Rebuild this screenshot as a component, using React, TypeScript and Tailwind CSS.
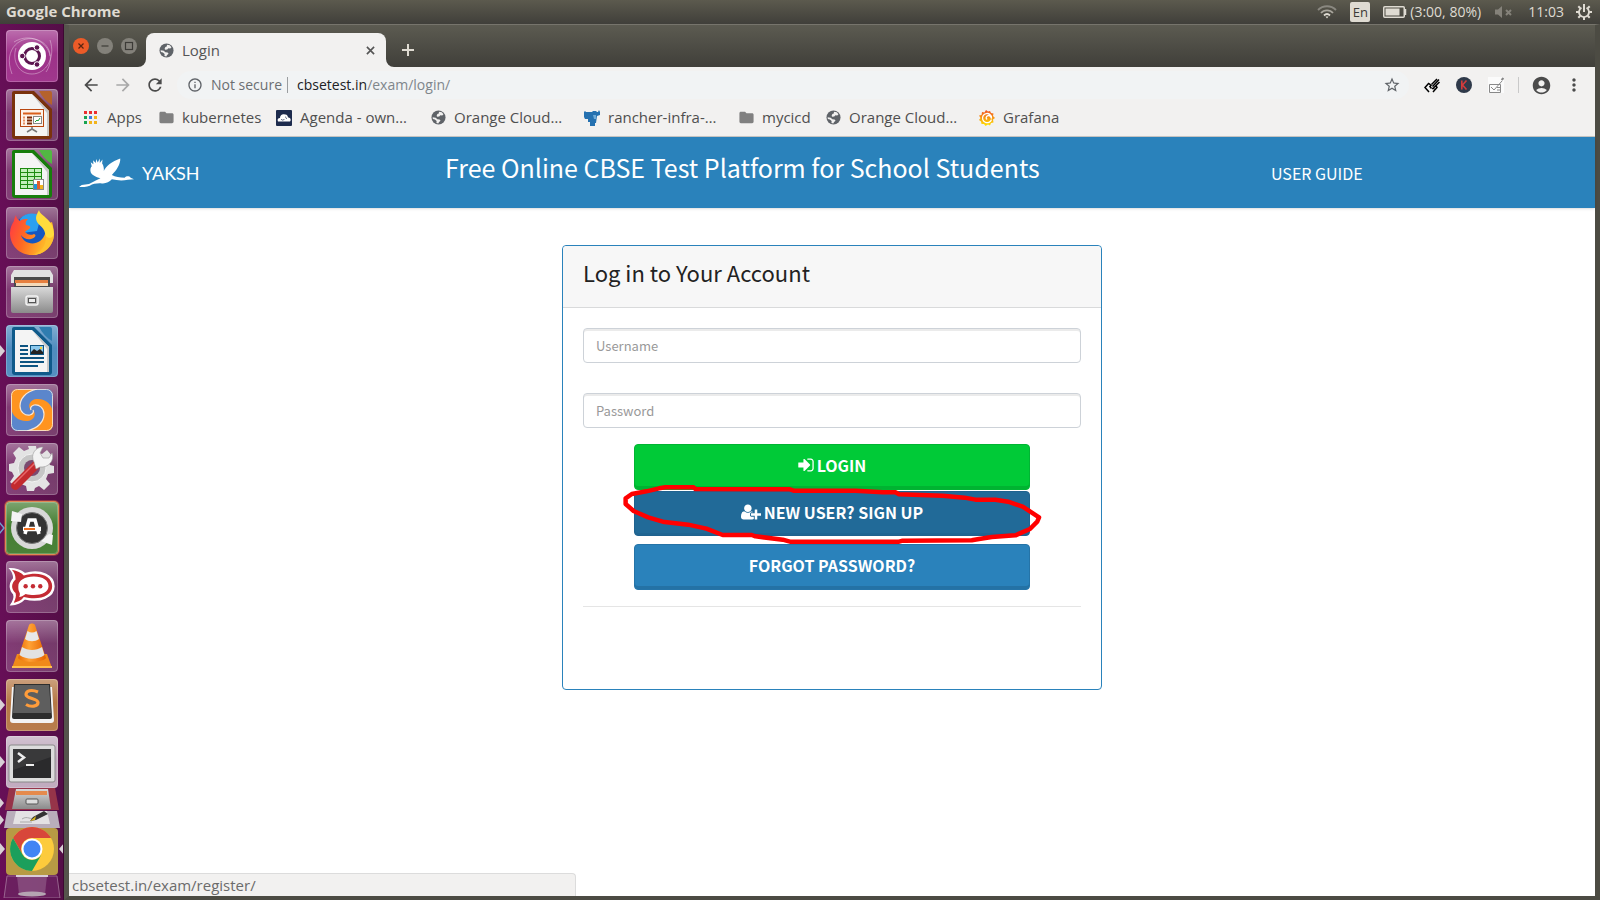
import type { ReactNode } from "react";
import {
  MdAccountCircle,
  MdArrowBack,
  MdArrowForward,
  MdFolder,
  MdInfoOutline,
  MdMoreVert,
  MdRefresh,
  MdStarBorder,
} from "react-icons/md";

/* ---------- Launcher ---------- */

const arrow = <path d="M0 20l5 6-5 6z" fill="#d8d0d6" />;

function Tile({
  label,
  fill = "#ffffff",
  opacity = 0.16,
  running,
  glow,
  children,
}: {
  label: string;
  fill?: string;
  opacity?: number;
  running?: ReactNode;
  glow?: boolean;
  children: ReactNode;
}) {
  return (
    <button aria-label={label} className="block h-[52px] w-16 shrink-0">
      <svg viewBox="0 0 64 52" className="h-[52px] w-16 overflow-visible">
        {running}
        {glow && (
          <>
            <rect x="4" y="-2" width="56" height="56" rx="6" fill="#f0803c" opacity=".35" />
            <rect x="5" y="-1" width="54" height="54" rx="5" fill="#f79a58" opacity=".8" />
          </>
        )}
        <rect x="6" width="52" height="52" rx="4" fill={fill} opacity={opacity} />
        <rect x="6" width="52" height="52" rx="4" fill="url(#gloss)" />
        <rect x="6.5" y=".5" width="51" height="51" rx="3.5" fill="none" stroke="#fff" opacity=".22" />
        {children}
      </svg>
    </button>
  );
}

function Doc({ dark, light }: { dark: string; light: string }) {
  return (
    <>
      <path d="M14 2h20l18 18v27a3 3 0 0 1-3 3H15a3 3 0 0 1-3-3V4a2 2 0 0 1 2-2z" fill={dark} />
      <path d="M39 2h11a2 2 0 0 1 2 2v12c-5-3-10-8-13-14z" fill={light} />
      <path d="M15 5h17l17 17v25H15z" fill="#f4f4f4" />
      <path d="M32 5l17 17v25h-2V24z" fill="#c9c9c9" />
    </>
  );
}

function Launcher() {
  return (
    <nav aria-label="Launcher" className="flex w-16 shrink-0 flex-col gap-[7px] overflow-hidden border-r border-[#3d0832] bg-linear-to-r from-[#670f57] to-[#540e47] pt-[6px]">
      <svg width="0" height="0" className="absolute">
        <defs>
          <linearGradient id="gloss" x2="0" y2="1">
            <stop offset="0" stopColor="#fff" stopOpacity=".32" />
            <stop offset=".45" stopColor="#fff" stopOpacity=".03" />
            <stop offset="1" stopColor="#fff" stopOpacity=".06" />
          </linearGradient>
          <linearGradient id="metal" x2="0" y2="1">
            <stop offset="0" stopColor="#d9d9d9" />
            <stop offset="1" stopColor="#8b8b8b" />
          </linearGradient>
          <linearGradient id="fox" x2="1" y2=".3">
            <stop offset="0" stopColor="#ff3647" />
            <stop offset=".45" stopColor="#ff6a22" />
            <stop offset="1" stopColor="#ffc32a" />
          </linearGradient>
          <linearGradient id="cone" x2="1" y2="0">
            <stop offset="0" stopColor="#e86a00" />
            <stop offset=".4" stopColor="#ffa235" />
            <stop offset="1" stopColor="#e56300" />
          </linearGradient>
          <clipPath id="shutter">
            <rect x="11" y="5" width="42" height="42" rx="6" />
          </clipPath>
        </defs>
      </svg>

      <Tile label="Search your computer" fill="#b0359a" opacity={0.75}>
        <g fill="none" stroke="#fff" strokeOpacity=".35">
          <path d="M12 44C2 18 22 4 38 10s14 24 8 32M50 10c6 18-4 34-18 34S12 30 16 18M14 12C30 2 48 12 50 26" />
        </g>
        <circle cx="32" cy="26" r="14" fill="#fff" />
        <circle cx="32" cy="26" r="7.5" fill="none" stroke="#5c1650" strokeWidth="3" />
        <g fill="#5c1650" stroke="#fff" strokeWidth="1">
          <circle cx="22.300" cy="26" r="2.800" />
          <circle cx="37" cy="17.500" r="2.800" />
          <circle cx="37" cy="34.500" r="2.800" />
        </g>
      </Tile>

      <Tile label="LibreOffice Impress">
        <Doc dark="#7a320c" light="#b5622c" />
        <rect x="20.500" y="20.500" width="23" height="17" fill="#fdf3ea" stroke="#b8460f" />
        <path d="M23 24.500h18" stroke="#d9601c" strokeWidth="2" />
        <path d="M27 28.500h5M27 31.500h5M27 34.500h5" stroke="#7a2a06" strokeWidth="2" />
        <path d="M23 28.500h2M23 31.500h2M23 34.500h2" stroke="#e89060" strokeWidth="2" />
        <rect x="33.500" y="27.500" width="8" height="7" fill="#fff" stroke="#888" />
        <path d="M35 33l2-2 1 1 2-3" stroke="#1fa03a" fill="none" />
        <path d="M32 38v2l-5 3M32 40l5 3" stroke="#777" strokeWidth="1.500" fill="none" />
      </Tile>

      <Tile label="LibreOffice Calc">
        <Doc dark="#177d0c" light="#52b843" />
        <rect x="20" y="20" width="22" height="21" fill="#1d8a10" />
        {[21, 25, 29, 33, 37].map((y) => (
          <path key={y} d={`M21 ${y + 1.5}h6M28 ${y + 1.5}h6M35 ${y + 1.5}h6`} stroke="#c2efba" strokeWidth="3" />
        ))}
        <rect x="33.500" y="31.500" width="10" height="10" fill="#fff" stroke="#888" />
        <path d="M35.500 41v-5" stroke="#1f97d8" strokeWidth="3" />
        <path d="M38.500 41v-8" stroke="#e0602c" strokeWidth="3" />
        <path d="M41.500 41v-4" stroke="#f0b420" strokeWidth="3" />
      </Tile>

      <Tile label="Firefox">
        <circle cx="32" cy="25" r="18" fill="#1457c0" />
        <path d="M20 12C25 6 34 5 41 9L37 24 22 26z" fill="#2ba0f0" />
        <path d="M16 8C16 11 18 13 20 14C22 12 25 12 28 12C26 14 25 16 26 18C29 19 31 19 30 21C29 23 26 23 25 25C27 27 30 29 34 27C37 28 35 31 31 32C27 33 23 31 21 28C23 36 33 39 40 34C45 30 47 24 45 18L52 15C55 24 54 34 48 41C43 46 37 48 32 48C19 48 10 38 10 26C10 21 12 17 14 14C14 12 15 10 16 8z" fill="url(#fox)" />
        <path d="M39 3C40 9 54 12 54 27C54 38 45 47 34 48C43 44 48 35 45 26C44 19 36 18 36 11C36 8 38 5 39 3z" fill="#ffdc3c" />
        <path d="M45 28C46 36 41 44 32 48C45 48 53 39 54 28C51 32 48 32 45 28z" fill="#ffb428" opacity=".7" />
      </Tile>

      <Tile label="Files">
        <path d="M14 4h36l3 5v8H11V9z" fill="#e2e2e2" />
        <path d="M14 11h36v10H14z" fill="#4a4a4a" />
        <path d="M15 14h33v3H15z" fill="#e67f3f" />
        <path d="M16 17h32v3H16z" fill="#f4d9b8" />
        <path d="M11 21h42v24a2 2 0 0 1-2 2H13a2 2 0 0 1-2-2z" fill="url(#metal)" />
        <rect x="26" y="30" width="12" height="9" rx="2" fill="#bbb" stroke="#f4f4f4" strokeWidth="1.500" />
        <rect x="28.500" y="32.500" width="7" height="4" fill="#eee" stroke="#555" />
      </Tile>

      <Tile label="LibreOffice Writer" fill="#4a90c4" opacity={0.95} running={arrow}>
        <Doc dark="#0f5a8a" light="#2f7db0" />
        <path d="M20 21h8M20 25h8M20 29h8M20 33h24M20 37h24M20 41h18" stroke="#0d5481" strokeWidth="1.800" />
        <rect x="30.500" y="20.500" width="13" height="9" fill="#8cc9ee" stroke="#0d5481" />
        <path d="M31 29v-2l3-3 3 2 3-2 3 3v2z" fill="#222" />
        <circle cx="41" cy="23" r="1.200" fill="#f5d13a" />
      </Tile>

      <Tile label="Shutter">
        <g clipPath="url(#shutter)">
          <rect x="11" y="5" width="42" height="42" fill="#5b86cc" />
          <g id="swirl">
            <path d="M11 5H37C25 8 20 15 20 22C20 28 25 32 30 31C33 30 34 28 33 26C37 30 34 36 28 37C19 38 12 32 11 24z" fill="#ff9420" />
            <path d="M37 5C25 8 20 15 20 22C20 28 25 32 30 31C33 30 34 28 33 26" fill="none" stroke="#f7e6d4" strokeWidth="1.200" />
          </g>
          <g transform="rotate(180 32 26)">
            <path d="M11 5H37C25 8 20 15 20 22C20 28 25 32 30 31C33 30 34 28 33 26C37 30 34 36 28 37C19 38 12 32 11 24z" fill="#ff9420" />
            <path d="M37 5C25 8 20 15 20 22C20 28 25 32 30 31C33 30 34 28 33 26" fill="none" stroke="#f7e6d4" strokeWidth="1.200" />
          </g>
        </g>
        <rect x="11.500" y="5.500" width="41" height="41" rx="6" fill="none" stroke="#f5ede4" opacity=".8" />
      </Tile>

      <Tile label="System Settings">
        <path d="M28 3h8l1 6 5 2 5-4 5 6-4 5 2 4 4 1v7l-6 1-2 5 4 5-6 6-5-4-4 2-1 3h-7l-1-5-5-2-5 3-6-5 4-6-2-4-3-1v-7l5-1 2-5-3-5 6-6 5 4 5-2z" fill="#e3e3e3" />
        <circle cx="32" cy="25" r="14" fill="#c6c6c6" stroke="#f2f2f2" />
        <circle cx="32" cy="25" r="8" fill="#7a4a70" />
        <path d="M34 18l6 6-22 22c-4 3-9-2-6-6z" fill="#c32a2e" />
        <path d="M35 20L14 41" stroke="#e8676a" strokeWidth="1.500" />
        <path d="M34 19c-4-7 1-15 9-15l-3 6 3 5h6l3-5c3 8-4 15-12 14l-4 2z" fill="#f3f3f3" stroke="#999" strokeWidth=".6" />
      </Tile>

      <Tile
        label="Software Updater"
        fill="#3f7a2c"
        opacity={1}
        glow
        running={<path d="M-1 20l5 6-5 6" fill="none" stroke="#6f9fd0" strokeWidth="1.500" />}
      >
        <circle cx="32" cy="26" r="21" fill="#d8d8d8" />
        <circle cx="32" cy="26" r="15.500" fill="#333" stroke="#777" />
        <path d="M12 9l10 3-1 8-10-1z" fill="#f4f4f4" />
        <path d="M52 43l-11-4 8-7 4 1z" fill="#f4f4f4" />
        <path d="M25 32l4-14h6l4 14" fill="none" stroke="#fff" strokeWidth="3.500" />
        <path d="M23 27h18" stroke="#fff" strokeWidth="4.500" />
        <path d="M24 27h11" stroke="#f07020" strokeWidth="2" />
      </Tile>

      <Tile label="Rocket.Chat">
        <g transform="translate(5.500 0) scale(.915 .97)">
          <path d="M5 8c7 0 12 2 16 5 18-5 32 2 32 13S38 43 21 39c-4 4-9 6-15 6 3-4 4-8 3-11-5-5-5-11 0-16 0-4-1-7-4-10z" fill="#fff" stroke="#fff" strokeWidth="1.500" />
          <path d="M7 9c6 1 10 3 13 6 18-5 31 1 31 11S37 41 20 37c-3 4-7 5-11 6 2-4 3-7 2-10-5-4-5-10 0-14 0-4-1-7-4-10z" fill="#c42b33" />
          <path d="M14 26c0-6 7-10 17-10s16 4 16 10-7 9-16 9c-3 0-6 0-9-1-3 2-5 3-7 3 1-2 1-4 0-5-1-2-1-4-1-6z" fill="#fff" />
          <g fill="#c42b33">
            <circle cx="22" cy="26" r="2.400" />
            <circle cx="30" cy="26" r="2.400" />
            <circle cx="38" cy="26" r="2.400" />
          </g>
        </g>
      </Tile>

      <Tile label="VLC">
        <path d="M17 34h30l5 14H12z" fill="#f08a1a" />
        <path d="M12 46h40v2H12z" fill="#ffc04a" />
        <path d="M29 5c1-2 5-2 6 0l11 33c-4 5-24 5-28 0z" fill="url(#cone)" />
        <path d="M27.500 11c3 2 6 2 9 0l2.500 8c-4 3-10 3-14 0z" fill="#e8e8e8" />
        <path d="M22 27c6 4 14 4 20 0l2.500 8c-7 5-18 5-25 0z" fill="#e2e2e2" />
      </Tile>

      <Tile label="Sublime Text" fill="#b87a40" opacity={0.95} running={arrow}>
        <path d="M12 8h40l2 33a3 3 0 0 1-3 3H13a3 3 0 0 1-3-3z" fill="#f3f3f3" />
        <path d="M14 5h36l2 33a2 2 0 0 1-2 2H14a2 2 0 0 1-2-2z" fill="#2e2e2e" />
        <path d="M15 6h34l2 28H13z" fill="#5e5e5e" />
        <path d="M38 13c-7-3-12-1-12 2.500 0 4.500 12 3.500 12 8 0 4-7 5-12 2" fill="none" stroke="#ff9c3a" strokeWidth="3.200" />
      </Tile>

      <div className="-mt-[2px] flex flex-col">
        <Tile label="Terminal" fill="#cfc2cf" opacity={0.85} running={arrow}>
          <rect x="9" y="9" width="46" height="37" rx="2" fill="#dcdcdc" stroke="#8a8a8a" />
          <rect x="13" y="13" width="38" height="29" fill="#2a2a2c" />
          <path d="M13 13h38v8L13 34z" fill="#444" opacity=".6" />
          <path d="M18 17l6 4.500-6 4.500" fill="none" stroke="#eee" strokeWidth="2.500" />
          <path d="M26 29h8" stroke="#eee" strokeWidth="2" />
        </Tile>
        <svg viewBox="0 0 64 110" className="h-[110px] w-16 shrink-0">
          <path d="M9 0h46l4 22H5z" fill="#963449" />
          <path d="M16 1h32l3 20H12z" fill="url(#metal)" />
          <path d="M16 3h31v4H16z" fill="#e58a4c" />
          <rect x="26" y="11" width="12" height="5" rx="1" fill="#ddd" stroke="#555" />
          <path d="M0 10l4 5-4 5zM0 27l4 5-4 5z" fill="#d8d0d6" />
          <path d="M7 23h50l3 17H4z" fill="#b9aebb" />
          <path d="M16 23h31l3 13H13z" fill="#e4e2e4" />
          <path d="M22 31c6-4 8 2 14-2M20 34h12" fill="none" stroke="#aaa" />
          <path d="M44 23l4 3-12 6-6 1 3-4z" fill="#333" />
          <path d="M36 28l-6 5 5-1z" fill="#d8b420" />
          <rect x="6" y="40" width="52" height="47" rx="4" fill="#b79a44" />
          <path d="M0 55l5 6-5 6zM64 55l-5 6 5 6z" fill="#d8d0d6" />
          <circle cx="32" cy="61" r="22" fill="#fccb3c" />
          <path d="M13 50a22 22 0 0 1 38.100 0H32A11 11 0 0 0 22.500 66.500z" fill="#d8473a" />
          <path d="M13 50a22 22 0 0 0 19 33l9.500-16.500a11 11 0 0 1-19 0z" fill="#1b9f5c" />
          <circle cx="32" cy="61" r="10.500" fill="#fff" />
          <circle cx="32" cy="61" r="8.500" fill="#4285f4" />
          <path d="M7 88h50l3 22H4z" fill="#6d2462" opacity=".8" stroke="#a77a9f" />
          <path d="M17 88h30l-2 18c-5 2-21 2-26 0z" fill="#b592b0" opacity=".35" />
          <path d="M16 88h32" stroke="#d9cdd7" strokeWidth="2" />
          <ellipse cx="32" cy="106" rx="14" ry="2.500" fill="#b5a5b2" />
        </svg>
      </div>
    </nav>
  );
}

/* ---------- System panel ---------- */

function Panel() {
  return (
    <header className="flex h-6 shrink-0 items-center bg-linear-to-b from-[#5c5a4e] to-[#403f3a] pr-2 pl-[6px] text-sm text-[#dfdbd2]">
      <span className="text-[15px] font-bold">Google Chrome</span>
      <div className="ml-auto flex items-center">
        <svg viewBox="0 0 20 14" className="mr-[13px] h-[14px] w-5" fill="none" strokeWidth="1.800">
          <path d="M1 5c5-5 13-5 18 0" stroke="#8a8880" />
          <path d="M4 8c3-3.500 9-3.500 12 0" stroke="#a9a69d" />
          <path d="M7 10.500c2-2 4-2 6 0" stroke="#dfdbd2" />
          <path d="M8.500 11.500h3L10 13.500z" fill="#dfdbd2" />
        </svg>
        <span className="mr-[13px] flex h-5 w-5 items-center justify-center rounded-xs bg-[#dfdbd2] text-[13px] text-[#3c3b37]">En</span>
        <svg viewBox="0 0 24 14" className="mr-[3px] h-[14px] w-6">
          <rect x=".75" y="1.750" width="20.500" height="10.500" rx="1" fill="none" stroke="#dfdbd2" strokeWidth="1.500" />
          <rect x="2.500" y="3.500" width="14" height="7" fill="#dfdbd2" />
          <path d="M22.500 4v6" stroke="#dfdbd2" strokeWidth="1.500" />
        </svg>
        <span className="mr-3 w-[73px] whitespace-nowrap">(3:00, 80%)</span>
        <svg viewBox="0 0 18 14" className="mr-[15px] h-[14px] w-[18px]" fill="#85827a">
          <path d="M0 4.500h3L7 1v12L3 9.500H0z" />
          <path d="M11 5l5 5M16 5l-5 5" stroke="#85827a" strokeWidth="2" />
        </svg>
        <span className="mr-3">11:03</span>
        <svg viewBox="0 0 16 16" className="h-4 w-4" fill="none" stroke="#dfdbd2">
          <path d="M5.500 3.700a5 5 0 1 0 5 0" strokeWidth="1.800" />
          <path d="M8 0v8M0 8h3M13 8h3M2.300 2.300l2 2M13.700 2.300l-2 2M2.300 13.700l2-2M13.700 13.700l-2-2M8 13v3" strokeWidth="2" />
        </svg>
      </div>
    </header>
  );
}

/* ---------- Browser chrome ---------- */

function Globe() {
  return (
    <svg viewBox="0 0 16 16" className="h-[15px] w-[15px] shrink-0">
      <circle cx="8" cy="8" r="7.500" fill="#5f6368" />
      <path d="M8.500 1.800l3 .6 1.800 2-1.300 1.400-2-.3-1.200 1.500-2.300.2L6 6l.8-1.800 1.500-.4z" fill="#f2f1f0" />
      <path d="M1.700 7.800l3.300.4 1.800 1.600 2.400.2 1 1.500-1.600 1.400-.8 1.500-2-.6.2-2L4.200 10.200 2 9.600z" fill="#f2f1f0" />
    </svg>
  );
}

function TabStrip() {
  return (
    <div className="flex h-[42px] shrink-0 items-end bg-linear-to-b from-[#5c5b51] to-[#403f3a]">
      <div className="flex gap-2 self-center pl-1">
        <button aria-label="Close window">
          <svg viewBox="0 0 16 16" className="h-4 w-4">
            <circle cx="8" cy="8" r="8" fill="#ec5b28" />
            <path d="M5.500 5.500l5 5M10.500 5.500l-5 5" stroke="#5a2410" strokeWidth="1.200" />
          </svg>
        </button>
        <button aria-label="Minimize">
          <svg viewBox="0 0 16 16" className="h-4 w-4">
            <circle cx="8" cy="8" r="8" fill="#83817a" />
            <path d="M4.500 8h7" stroke="#3c3b37" strokeWidth="1.200" />
          </svg>
        </button>
        <button aria-label="Maximize">
          <svg viewBox="0 0 16 16" className="h-4 w-4">
            <circle cx="8" cy="8" r="8" fill="#83817a" />
            <rect x="4.500" y="4.500" width="7" height="7" fill="none" stroke="#3c3b37" strokeWidth="1.200" />
          </svg>
        </button>
      </div>
      <svg viewBox="0 0 8 8" className="ml-[1px] h-2 w-2" fill="#f2f1f0">
        <path d="M8 0v8H0a8 8 0 0 0 8-8z" />
      </svg>
      <div className="flex h-[34px] w-60 items-center rounded-t-lg bg-[#f2f1f0] pr-2 pl-[13px] text-[#555]">
        <Globe />
        <span className="ml-2 text-[15px]">Login</span>
        <button aria-label="Close tab" className="ml-auto flex h-4 w-4 items-center justify-center">
          <svg viewBox="0 0 10 10" className="h-[9px] w-[9px]" stroke="#555" strokeWidth="1.800">
            <path d="M1 1l8 8M9 1L1 9" />
          </svg>
        </button>
      </div>
      <svg viewBox="0 0 8 8" className="h-2 w-2" fill="#f2f1f0">
        <path d="M0 0v8h8a8 8 0 0 1-8-8z" />
      </svg>
      <button aria-label="New tab" className="mb-[11px] ml-2">
        <svg viewBox="0 0 12 12" className="h-3 w-3" stroke="#dfdbd2" strokeWidth="2">
          <path d="M6 0v12M0 6h12" />
        </svg>
      </button>
    </div>
  );
}

function Toolbar() {
  return (
    <div className="flex h-9 shrink-0 items-center bg-[#f2f1f0] pr-3 pl-3 text-[#4b4b4b]">
      <button aria-label="Back" className="mr-3"><MdArrowBack className="h-5 w-5" /></button>
      <button aria-label="Forward" className="mr-3"><MdArrowForward className="h-5 w-5 text-[#a8a8a8]" /></button>
      <button aria-label="Reload" className="mr-3"><MdRefresh className="h-5 w-5" /></button>
      <div className="flex h-7 flex-1 items-center rounded-full bg-[#f1f3f4] pr-2 pl-[10px] text-sm">
        <MdInfoOutline className="h-4 w-4 text-[#5f6368]" />
        <span className="ml-2 w-[70px] whitespace-nowrap text-[#6b6e72]">Not secure</span>
        <span className="mx-[6px] h-4 w-px bg-[#9a9da0]" />
        <span className="ml-[3px] flex-1 text-[#80868b]">
          <span className="text-[#202124]">cbsetest.in</span>/exam/login/
        </span>
        <button aria-label="Bookmark this page"><MdStarBorder className="h-[18px] w-[18px] text-[#5f6368]" /></button>
      </div>
      <div className="ml-[15px] flex items-center gap-4">
        <svg viewBox="0 0 16 16" className="h-4 w-4" fill="none" stroke="#000" strokeWidth="1.500">
          <path d="M5 6L1 10.500 5 15M9 15l4-4.500L11.500 8M5 6.500L7.500 9M5.500 9l2 2.500M7.500 7.500L13 2M8.500 9.500L15 2.500M9.500 11l6-6M8 11.500h2.500" />
        </svg>
        <svg viewBox="0 0 16 16" className="h-4 w-4">
          <circle cx="8" cy="8" r="8" fill="#2f3a4a" />
          <path d="M5.800 3.500v9M10.500 3.500L6.500 8l4 4.500" stroke="#d23c3c" strokeWidth="1.600" fill="none" />
        </svg>
        <svg viewBox="0 0 16 16" className="h-4 w-4" fill="none" stroke="#888">
          <rect width="16" height="16" fill="#fbfbfb" stroke="none" />
          <path d="M1.500 7.500h11v8h-11zM3 10l3 3 8-9M9 10.500h3M9 13h3" />
          <path d="M13.500 3l2-2" strokeWidth="2" />
        </svg>
      </div>
      <span className="ml-[14px] h-4 w-px bg-[#c9c9c9]" />
      <MdAccountCircle className="ml-3 h-[21px] w-[21px]" />
      <button aria-label="Menu" className="-mr-px ml-3"><MdMoreVert className="h-5 w-5" /></button>
    </div>
  );
}

const globe = <Globe />;
const folder = <MdFolder className="h-[17px] w-[17px] shrink-0 text-[#808080]" />;

const appColors = ["#ea2f2f", "#ea2f2f", "#ea2f2f", "#17a350", "#3b7de0", "#f2b41c", "#17a350", "#f2b41c", "#f2b41c"];

const appsIcon = (
  <svg viewBox="0 0 16 16" className="h-4 w-4">
    {appColors.map((c, i) => (
      <rect key={i} x={1 + (i % 3) * 5} y={1 + Math.floor(i / 3) * 5} width="3" height="3" fill={c} />
    ))}
  </svg>
);
const cloudIcon = (
  <svg viewBox="0 0 16 16" className="h-4 w-4">
    <rect width="16" height="16" rx="1" fill="#1d2b4d" />
    <path d="M2 11.500c-1-2 0-3.500 2-3.500 0-3 2.500-4.500 5-3.500 1.500-.5 3 1 3 3 2.500 0 3.500 2.500 2 4z" fill="#fff" />
    <path d="M5 9c1 1.500 2.500 1.500 3.500 0M9 7c1 0 1.500 1 1.500 2" fill="none" stroke="#1d2b4d" strokeWidth=".7" />
  </svg>
);
const rancherIcon = (
  <svg viewBox="0 0 16 16" className="h-4 w-4" fill="#2571b0">
    <path d="M0 2l1-1 1 1h6l1-1h3l1 1h1l1-2 1 2v3l-3 1-1 7h-1v3H6v-4H4V9H1L0 7z" />
    <path d="M9 5h3v4h-2z" fill="#6eabd8" />
  </svg>
);
const grafanaIcon = (
  <svg viewBox="0 0 16 16" className="h-4 w-4">
    <defs>
      <linearGradient id="graf" x2="0" y2="1">
        <stop offset="0" stopColor="#f04e25" />
        <stop offset="1" stopColor="#ffe600" />
      </linearGradient>
    </defs>
    <path d="M7 0l2 1.500L11 1l1 2 2.500.5-.5 2.500L16 8l-2 1.500.5 3-2.500.5-1 2.500-2-1-2.500 1.500-1.500-2L2.500 14 2 11.500 0 10l1.500-2L0 5.500 2.500 5 3 2l2.500.5z" fill="url(#graf)" />
    <path d="M12.500 9.500A4.600 4.600 0 1 1 11 4.500c1.500 1 1.800 2.500 1.500 4-.5-2-2-3.200-3.500-2.900-2 .4-2.500 3-.8 3.700" fill="none" stroke="#fff" strokeWidth="1.300" />
  </svg>
);

const bookmarks: { icon: ReactNode; label: string; width: string }[] = [
  { icon: appsIcon, label: "Apps", width: "w-[75px]" },
  { icon: folder, label: "kubernetes", width: "w-[118px]" },
  { icon: cloudIcon, label: "Agenda - own…", width: "w-[154px]" },
  { icon: globe, label: "Orange Cloud…", width: "w-[154px]" },
  { icon: rancherIcon, label: "rancher-infra-…", width: "w-[154px]" },
  { icon: folder, label: "mycicd", width: "w-[87px]" },
  { icon: globe, label: "Orange Cloud…", width: "w-[154px]" },
  { icon: grafanaIcon, label: "Grafana", width: "w-[82px]" },
];

function BookmarksBar() {
  return (
    <nav aria-label="Bookmarks" className="flex h-[34px] shrink-0 items-center overflow-hidden border-b border-[#c8c7c5] bg-[#f2f1f0] pb-1 pl-[14px] text-[15px] text-[#4f4f4f]">
      {bookmarks.map((b, i) => (
        <a key={i} href="#" className={`flex shrink-0 items-center gap-2 whitespace-nowrap ${b.width}`}>
          <span className="flex w-4 shrink-0 justify-center">{b.icon}</span>
          {b.label}
        </a>
      ))}
    </nav>
  );
}

/* ---------- Web page ---------- */

function SignInIcon() {
  return (
    <svg viewBox="0 0 1536 1792" className="h-[18px] w-4" fill="currentColor">
      <path d="M1184 896q0 26-19 45l-544 544q-19 19-45 19t-45-19-19-45v-288h-448q-26 0-45-19t-19-45v-384q0-26 19-45t45-19h448v-288q0-26 19-45t45-19 45 19l544 544q19 19 19 45zm352-352v704q0 119-84.500 203.500t-203.500 84.500h-320q-13 0-22.500-9.500t-9.500-22.500q0-4-1-20t-.5-26.500 3-23.500 10-19.500 20.500-6.500h320q66 0 113-47t47-113v-704q0-66-47-113t-113-47h-312l-11.500-1-11.500-3-8-5.500-7-9-2-13.500q0-4-1-20t-.5-26.500 3-23.500 10-19.500 20.500-6.500h320q119 0 203.500 84.500t84.500 203.500z" />
    </svg>
  );
}

function UserPlusIcon() {
  return (
    <svg viewBox="0 0 2048 1792" className="h-[18px] w-5" fill="currentColor">
      <path d="M704 896q-159 0-271.500-112.500t-112.500-271.500 112.500-271.500 271.500-112.500 271.500 112.500 112.500 271.500-112.500 271.500-271.500 112.500zm960 128h352q13 0 22.500 9.500t9.500 22.500v192q0 13-9.500 22.500t-22.500 9.500h-352v352q0 13-9.500 22.500t-22.500 9.500h-192q-13 0-22.500-9.500t-9.500-22.500v-352h-352q-13 0-22.500-9.500t-9.500-22.500v-192q0-13 9.500-22.500t22.500-9.500h352v-352q0-13 9.500-22.500t22.500-9.500h192q13 0 22.500 9.500t9.500 22.500v352zm-736 224q0 52 38 90t90 38h256v238q-68 50-171 50h-874q-121 0-194-69t-73-190q0-53 3.500-103.500t14-109 26.500-108.500 43-97.500 62-81 85.500-53.500 111.500-20q19 0 39 17 79 61 154.500 91.500t164.500 30.500 164.500-30.500 154.500-91.500q20-17 39-17 132 0 217 96h-223q-52 0-90 38t-38 90v192z" />
    </svg>
  );
}

function SiteHeader() {
  return (
    <header className="grid h-[71px] shrink-0 grid-cols-[376px_1fr_324px] items-center bg-[#2a82bb] text-white shadow-sm">
      <a href="#" className="flex items-center gap-2 pl-[10px]">
        <svg viewBox="0 0 164 88" className="h-[30px] w-[55px]" fill="#fff">
          <path d="M0 86L8 80 30 77 50 66 64 60C50 56 38 50 35 42 33 34 34 28 38 24L35 12 43 18 42 6 50 14 51 2 56 13 62 1 62 14 70 4 69 16C73 22 75 30 74 38 80 24 98 10 123 1 124 18 112 36 98 50 108 55 122 58 136 58 142 52 150 53 154 58L164 63 146 64C128 68 114 66 98 63 90 72 80 76 68 75 54 74 42 76 32 82 22 86 10 86 0 86z" />
        </svg>
        <span className="font-[Lato,sans-serif] text-lg">YAKSH</span>
      </a>
      <h1 className="-mt-3 text-[25px] leading-8 whitespace-nowrap">Free Online CBSE Test Platform for School Students</h1>
      <a href="#" className="text-base leading-6">USER GUIDE</a>
    </header>
  );
}

function LoginCard() {
  const field =
    "block h-[35px] w-full rounded-sm border border-[#cdd2d8] bg-white px-3 text-[13px] leading-4 placeholder:text-[#999] shadow-[inset_0_2px_0_#ebebeb] outline-none";
  const button =
    "flex w-full items-center justify-center gap-[3px] rounded-sm pb-1 text-base leading-6 font-bold text-white";
  return (
    <section className="relative mx-auto mt-[37px] w-[540px] max-w-full rounded-sm border border-[#2a82bb] bg-white">
      <h2 className="h-[62px] rounded-t-sm border-b border-[#d9dadb] bg-[#f7f7f7] px-5 pt-[11px] text-[22px] leading-[30px] text-[#222]">
        Log in to Your Account
      </h2>
      <form className="px-5 pt-5 pb-[82px]" onSubmit={(e) => e.preventDefault()}>
        <input aria-label="Username" placeholder="Username" className={field} />
        <input aria-label="Password" type="password" placeholder="Password" className={`mt-[30px] ${field}`} />
        <div className="mx-auto mt-4 w-[396px] max-w-full">
          <button className={`h-[46px] border border-[#00b533] bg-[#00ca37] shadow-[inset_0_-3px_0_#00b331] ${button}`}>
            <SignInIcon />
            LOGIN
          </button>
          <button type="button" className={`mt-px h-[45px] border border-[#1f628f] bg-[#216a98] shadow-[inset_0_-2px_0_#1f6592] ${button}`}>
            <UserPlusIcon />
            NEW USER? SIGN UP
          </button>
          <button type="button" className={`mt-2 h-[46px] border border-[#2574a8] bg-[#2a82bb] shadow-[inset_0_-3px_0_#2472a5] ${button}`}>
            FORGOT PASSWORD?
          </button>
        </div>
        <hr className="mt-4 border-[#e5e5e5]" />
      </form>
      <svg viewBox="0 0 570 120" className="pointer-events-none absolute top-[184px] -left-[13px] h-[120px] w-[570px]">
        <g transform="scale(.3636 .3333)">
          <path
            vectorEffect="non-scaling-stroke"
            d="M317 172L395 172 400 177 660 178 670 182 840 182 915 187 950 187 960 193 1080 197 1140 203 1170 209 1225 209 1260 215 1300 230 1345 262 1340 275 1320 297 1280 316 1215 321 1180 327 1160 331 970 332 960 335 660 335 640 329 565 319 555 315 475 315 430 296 380 284 310 275 270 262 230 243 208 222 208 205 225 192 265 184 300 175z"
            fill="none"
            stroke="#f00"
            strokeWidth="4.500"
            strokeLinejoin="round"
          />
        </g>
      </svg>
    </section>
  );
}

export default function App() {
  return (
    <div className="flex h-screen min-h-[600px] flex-col overflow-hidden bg-[#3f3e39] font-['Open_Sans','Noto_Sans',sans-serif]">
      <Panel />
      <div className="flex min-h-0 flex-1">
        <Launcher />
        <div className="flex min-w-0 flex-1 flex-col border-t border-r-5 border-b-4 border-l-5 border-t-[#76746c] border-r-[#4c4b43] border-b-[#4c4b43] border-l-[#55544c]">
          <TabStrip />
          <Toolbar />
          <BookmarksBar />
          <main className="relative flex min-h-0 flex-1 flex-col bg-white font-['Noto_Sans_CJK_SC',sans-serif]">
            <SiteHeader />
            <LoginCard />
            <div className="absolute bottom-0 left-0 h-[23px] w-[507px] rounded-tr-sm border-t border-r border-[#dcdcdc] bg-[#f2f1f0] pl-[3px] font-['Open_Sans','Noto_Sans',sans-serif] text-[15px] leading-[22px] text-[#6b6b6b]">
              cbsetest.in/exam/register/
            </div>
          </main>
        </div>
      </div>
    </div>
  );
}
